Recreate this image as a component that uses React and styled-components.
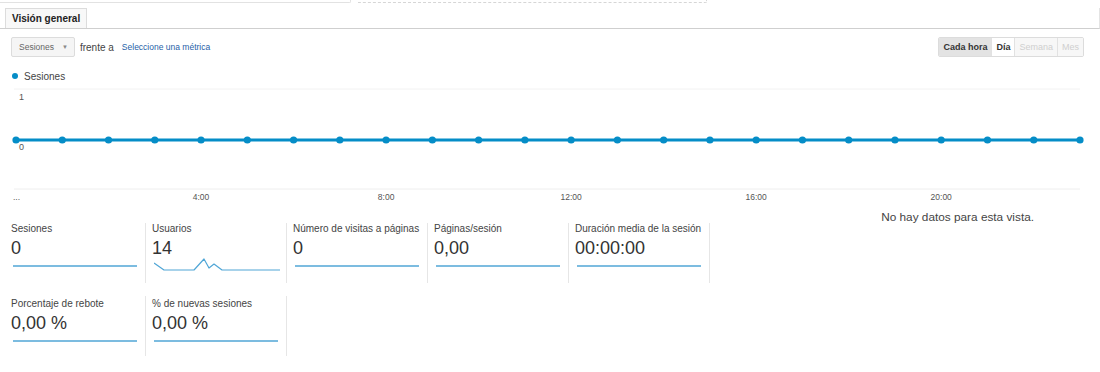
import React from 'react';
import styled, { createGlobalStyle } from 'styled-components';

const GlobalStyle = createGlobalStyle`
  html, body {
    margin: 0;
    padding: 0;
    background: #fff;
    font-family: "Liberation Sans", Arial, sans-serif;
    color: #333;
  }
`;

const Page = styled.div`
  width: 1100px;
  height: 372px;
  overflow: hidden;
  background: #fff;
`;

const TopStrip = styled.div`
  display: flex;
  gap: 7px;
  height: 3px;
`;

const TopBox = styled.div`
  width: ${p => p.w}px;
  height: 2px;
  border-bottom: 1px ${p => (p.dashed ? 'dashed #d6d6d6' : 'solid #e2e2e2')};
  border-right: 1px ${p => (p.dashed ? 'dashed #d6d6d6' : 'solid #e2e2e2')};
  border-bottom-right-radius: 2px;
`;

const TabBar = styled.div`
  display: flex;
  margin-top: 5px;
  padding-left: 5px;
  border-bottom: 1px solid #cfcfcf;
  border-right: 1px solid #e4e4e4;
  height: 20px;
`;

const Tab = styled.div`
  height: 20px;
  padding: 0 6px;
  box-sizing: border-box;
  border: 1px solid #dcdcdc;
  border-bottom: none;
  background: #f8f8f8;
  font-size: 10px;
  font-weight: bold;
  color: #222;
  line-height: 20px;
`;

const Controls = styled.div`
  display: flex;
  align-items: center;
  justify-content: space-between;
  padding: 0 16px 0 11px;
  margin-top: 8px;
  height: 20px;
`;

const LeftControls = styled.div`
  display: flex;
  align-items: center;
`;

const Dropdown = styled.div`
  display: flex;
  align-items: center;
  gap: 8px;
  height: 20px;
  box-sizing: border-box;
  padding: 0 6px 0 7px;
  border: 1px solid #dcdcdc;
  border-radius: 2px;
  background: #f5f5f5;
  font-size: 8.5px;
  color: #666;
`;

const Caret = styled.span`
  font-size: 6px;
  color: #888;
`;

const Versus = styled.span`
  margin-left: 5px;
  font-size: 10px;
  color: #444;
`;

const MetricLink = styled.span`
  margin-left: 8px;
  font-size: 8.5px;
  color: #1f5fa8;
`;

const ButtonGroup = styled.div`
  display: flex;
  height: 20px;
  border: 1px solid #dcdcdc;
  border-radius: 2px;
  box-sizing: border-box;
  overflow: hidden;
`;

const GroupButton = styled.div`
  padding: 0 4px;
  line-height: 18px;
  font-size: 9px;
  border-left: ${p => (p.first ? 'none' : '1px solid #e2e2e2')};
  color: ${p => (p.disabled ? '#cfcfcf' : '#333')};
  font-weight: ${p => (p.disabled ? 'normal' : 'bold')};
  background: ${p => (p.active ? '#e3e3e3' : p.disabled ? '#f7f7f7' : '#fff')};
`;

const Legend = styled.div`
  display: flex;
  align-items: center;
  gap: 6px;
  margin-top: 13px;
  padding-left: 12px;
  font-size: 10px;
  color: #444;
  height: 12px;
`;

const LegendDot = styled.span`
  width: 6px;
  height: 6px;
  border-radius: 50%;
  background: #058dc7;
`;

const ChartBox = styled.div`
  margin-top: 5px;
  height: 124px;
`;

const NoData = styled.div`
  display: flex;
  justify-content: flex-end;
  padding-right: 66px;
  font-size: 11.8px;
  color: #444;
  height: 12px;
  line-height: 12px;
  margin-top: 0;
`;

const MetricRow = styled.div`
  display: flex;
  padding-left: 5px;
  margin-top: ${p => p.mt}px;
`;

const MetricCard = styled.div`
  width: 141px;
  box-sizing: border-box;
  padding: ${p => p.pt}px 8px 0 6px;
  height: 60px;
  border-right: 1px solid #e6e6e6;
`;

const MetricLabel = styled.div`
  font-size: 10px;
  line-height: 12px;
  color: #444;
  white-space: nowrap;
`;

const MetricValue = styled.div`
  font-size: 18px;
  line-height: 22px;
  margin-top: 2px;
  color: #333;
`;

const Spark = styled.svg`
  display: block;
  margin: -1px 0 0 2px;
`;

const xs = Array.from({ length: 24 }, (_, i) => 16 + i * (1064 / 23));
const ticks = [
  { label: '...', i: 0, x: 13 },
  { label: '4:00', i: 4 },
  { label: '8:00', i: 8 },
  { label: '12:00', i: 12 },
  { label: '16:00', i: 16 },
  { label: '20:00', i: 20 },
];

const Chart = () => (
  <svg width="1100" height="124" viewBox="0 0 1100 124">
    <line x1="14" y1="2" x2="1080" y2="2" stroke="#f2f2f2" strokeWidth="1" />
    <line x1="14" y1="102" x2="1080" y2="102" stroke="#eeeeee" strokeWidth="1" />
    <text x="19" y="13" fontSize="9" fill="#555" fontFamily="Liberation Sans, Arial, sans-serif">1</text>
    <text x="19" y="63" fontSize="9" fill="#555" fontFamily="Liberation Sans, Arial, sans-serif">0</text>
    <line x1={xs[0]} y1="53" x2={xs[23]} y2="53" stroke="#058dc7" strokeWidth="3" />
    {xs.map((x, i) => (
      <circle key={i} cx={x} cy="53" r="3.6" fill="#058dc7" />
    ))}
    {ticks.map(t => (
      <text
        key={t.label}
        x={t.x || xs[t.i]}
        y="113"
        fontSize="8.5"
        fill="#555"
        textAnchor={t.x ? 'start' : 'middle'}
        fontFamily="Liberation Sans, Arial, sans-serif"
      >
        {t.label}
      </text>
    ))}
  </svg>
);

const Sparkline = ({ users }) => (
  <Spark width="126" height="14" viewBox="0 0 126 14">
    {users ? (
      <polyline
        points="0,5 10,12 40,12 50,1 55,10 60,6 68,12 126,12"
        fill="none"
        stroke="#50a6d6"
        strokeWidth="1.2"
        strokeLinejoin="round"
      />
    ) : (
      <line x1="0" y1="8" x2="124" y2="8" stroke="#50a6d6" strokeWidth="1.6" />
    )}
  </Spark>
);

const rowOne = [
  { label: 'Sesiones', value: '0' },
  { label: 'Usuarios', value: '14', users: true },
  { label: 'Número de visitas a páginas', value: '0' },
  { label: 'Páginas/sesión', value: '0,00' },
  { label: 'Duración media de la sesión', value: '00:00:00' },
];

const rowTwo = [
  { label: 'Porcentaje de rebote', value: '0,00 %' },
  { label: '% de nuevas sesiones', value: '0,00 %' },
];

const App = () => (
  <Page>
    <GlobalStyle />
    <TopStrip>
      <TopBox w={350} />
      <TopBox w={348} dashed />
    </TopStrip>
    <TabBar>
      <Tab>Visión general</Tab>
    </TabBar>
    <Controls>
      <LeftControls>
        <Dropdown>
          Sesiones <Caret>▼</Caret>
        </Dropdown>
        <Versus>frente a</Versus>
        <MetricLink>Seleccione una métrica</MetricLink>
      </LeftControls>
      <ButtonGroup>
        <GroupButton first active>Cada hora</GroupButton>
        <GroupButton>Día</GroupButton>
        <GroupButton disabled>Semana</GroupButton>
        <GroupButton disabled>Mes</GroupButton>
      </ButtonGroup>
    </Controls>
    <Legend>
      <LegendDot />
      Sesiones
    </Legend>
    <ChartBox>
      <Chart />
    </ChartBox>
    <NoData>No hay datos para esta vista.</NoData>
    <MetricRow mt={0}>
      {rowOne.map(m => (
        <MetricCard key={m.label} pt={0}>
          <MetricLabel>{m.label}</MetricLabel>
          <MetricValue>{m.value}</MetricValue>
          <Sparkline users={m.users} />
        </MetricCard>
      ))}
    </MetricRow>
    <MetricRow mt={13}>
      {rowTwo.map(m => (
        <MetricCard key={m.label} pt={2}>
          <MetricLabel>{m.label}</MetricLabel>
          <MetricValue>{m.value}</MetricValue>
          <Sparkline />
        </MetricCard>
      ))}
    </MetricRow>
  </Page>
);

export default App;
